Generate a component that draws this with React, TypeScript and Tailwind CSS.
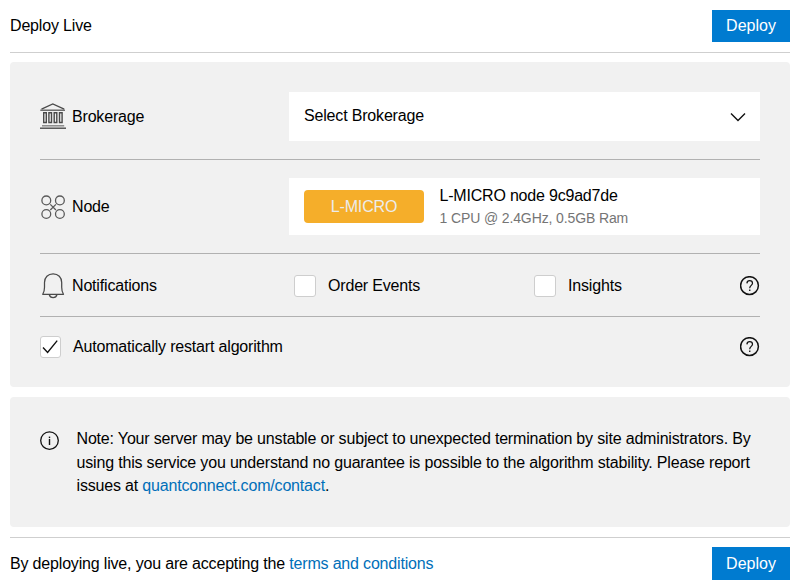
import type { ReactNode } from 'react';

function BankIcon() {
  return (
    <svg width="26" height="27" viewBox="0 0 26 27" fill="none" stroke="#4a4a4a" className="shrink-0">
      <path d="M1.5 6.2 12.8.9l11.4 5.3" strokeWidth="1.3" />
      <path d="M.3 7.2h24.7" strokeWidth="1.3" stroke="#555" />
      <path d="M3.7 9.7h2.6v9.8H3.7zM8.9 9.7h2.6v9.8H8.9zM14.2 9.7h2.6v9.8h-2.6zM19.5 9.7h2.6v9.8h-2.6z" strokeWidth="1.4" />
      <path d="M2 22.8h22.2" stroke="#8a8a8a" strokeWidth="1.5" />
      <path d="M0 25.2h26" strokeWidth="1.4" />
    </svg>
  );
}

function NodeIcon() {
  return (
    <svg width="26" height="26" viewBox="0 0 26 26" fill="none" stroke="#5a5a5a" strokeWidth="1.3" className="shrink-0">
      <circle cx="6.3" cy="6.4" r="4.4" />
      <circle cx="19.9" cy="6.4" r="4.4" />
      <circle cx="6.3" cy="20" r="4.4" />
      <circle cx="19.9" cy="20" r="4.4" />
      <path d="m10.3 10.4 5.6 5.6M15.9 10.4 10.3 16" />
    </svg>
  );
}

function BellIcon() {
  return (
    <svg width="26" height="26" viewBox="0 0 26 26" fill="none" stroke="#4a4a4a" strokeWidth="1.25" className="shrink-0">
      <path d="M2.7 21.3c1.2-1.6 1.8-3.6 1.8-7V9.6c0-5.2 3.5-8.7 8.6-8.7s8.6 3.5 8.6 8.7v4.7c0 3.4.6 5.4 1.8 7z" strokeLinejoin="round" />
      <path d="M9.2 21.5c.5 2.1 1.9 3.1 3.9 3.1s3.4-1 3.9-3.1" />
    </svg>
  );
}

function HelpIcon() {
  return (
    <svg width="20" height="20" viewBox="0 0 20 20" fill="none" stroke="#111" className="shrink-0">
      <circle cx="9.5" cy="9.6" r="8.9" strokeWidth="1.5" />
      <path d="M6.9 7.4c.1-1.7 1.2-2.7 2.8-2.7 1.7 0 2.8 1 2.8 2.5 0 2.2-2.8 2.2-2.8 5" strokeWidth="1.2" />
      <path d="M9.1 13.6h1.3v1.3H9.1z" fill="#111" stroke="none" />
    </svg>
  );
}

function InfoIcon() {
  return (
    <svg width="20" height="20" viewBox="0 0 20 20" fill="none" stroke="#111" className="shrink-0">
      <circle cx="9.5" cy="9.6" r="8.8" strokeWidth="1.3" />
      <path d="M9.5 8v6" strokeWidth="1.4" />
      <path d="M9.5 5.6v1.5" strokeWidth="1.4" />
    </svg>
  );
}

function Checkbox({ checked = false }: { checked?: boolean }) {
  return (
    <span className={`flex h-[22px] shrink-0 items-center justify-center rounded-[3px] border border-[#cecece] bg-white ${checked ? 'w-[21px]' : 'w-[22px]'}`}>
      {checked && (
        <svg width="19" height="20" viewBox="0 0 19 20" fill="none" stroke="#111" strokeWidth="1.4">
          <path d="m2 10.6 4.6 4.8L16.2 3.6" />
        </svg>
      )}
    </span>
  );
}

function DeployButton({ tall = false }: { tall?: boolean }) {
  return (
    <button className={`w-[78px] bg-[#007bd0] text-center tracking-normal text-white ${tall ? 'h-[33px]' : 'h-8'}`}>
      Deploy
    </button>
  );
}

function Label({ icon, children }: { icon: ReactNode; children: ReactNode }) {
  return (
    <div className="flex w-[249px] shrink-0 items-center gap-1.5">
      {icon}
      <span>{children}</span>
    </div>
  );
}

export default function App() {
  return (
    <div className="flex h-[585px] w-[794px] flex-col overflow-hidden bg-white pt-2.5 pr-1 pl-2.5 font-['Liberation_Sans',Arial,sans-serif] text-base leading-6 tracking-[-0.175px] text-black">
      <header className="flex h-[43px] w-[780px] items-start justify-between border-b border-[#cfcfcf]">
        <h1 className="pt-1">Deploy Live</h1>
        <DeployButton />
      </header>

      <main className="mt-[9px] h-[325px] w-[780px] rounded-[4px] bg-[#f1f1f1] px-[30px] pt-[30px]">
        <div className="flex h-[68px] border-b border-[#b1b1b1]">
          <div className="flex h-[49px] w-full">
            <Label icon={<BankIcon />}>Brokerage</Label>
            <div className="flex grow items-center justify-between bg-white pr-3.5 pl-[15px]">
              <span className="pb-0.5">Select Brokerage</span>
              <svg width="16" height="10" viewBox="0 0 16 10" fill="none" stroke="#111" strokeWidth="1.4">
                <path d="m1 1.5 7 7 7-7" />
              </svg>
            </div>
          </div>
        </div>

        <div className="flex h-[94px] items-center border-b border-[#b1b1b1]">
          <Label icon={<NodeIcon />}>Node</Label>
          <div className="flex h-[57px] grow items-center bg-white pl-[15px]">
            <span className="h-[33px] w-[120px] rounded-[4px] bg-[#f5ae2a] text-center leading-[33px] text-[#ececec]">L-MICRO</span>
            <div className="ml-[15.5px]">
              <div className="leading-[22px] tracking-[-0.2px]">L-MICRO node 9c9ad7de</div>
              <div className="text-sm leading-[22px] tracking-[-0.12px] text-[#757575]">1 CPU @ 2.4GHz, 0.5GB Ram</div>
            </div>
          </div>
        </div>

        <div className="flex h-[63px] items-center border-b border-[#b1b1b1] pt-px">
          <Label icon={<BellIcon />}>Notifications</Label>
          <div className="flex w-[240px] items-center gap-3 pl-[5px]">
            <Checkbox />
            <span>Order Events</span>
          </div>
          <div className="flex grow items-center gap-3 pl-[5px]">
            <Checkbox />
            <span>Insights</span>
          </div>
          <HelpIcon />
        </div>

        <div className="flex h-[60px] items-center">
          <Checkbox checked />
          <span className="ml-3 grow">Automatically restart algorithm</span>
          <HelpIcon />
        </div>
      </main>

      <section className="mt-2.5 flex h-[130px] w-[780px] items-start rounded-[4px] bg-[#f1f1f1] pt-[30px] pl-[30px]">
        <div className="pt-1">
          <InfoIcon />
        </div>
        <p className="ml-[16.5px] leading-[23.5px] whitespace-nowrap">
          Note: Your server may be unstable or subject to unexpected termination by site administrators. By
          <br />
          using this service you understand no guarantee is possible to the algorithm stability. Please report
          <br />
          issues at <a className="text-[#006fb9]">quantconnect.com/contact</a>.
        </p>
      </section>

      <footer className="mt-2.5 flex w-[780px] items-start justify-between border-t border-[#cfcfcf] pt-[9px]">
        <p className="pt-[5px]">
          By deploying live, you are accepting the <a className="text-[#006fb9]">terms and conditions</a>
        </p>
        <DeployButton tall />
      </footer>
    </div>
  );
}
